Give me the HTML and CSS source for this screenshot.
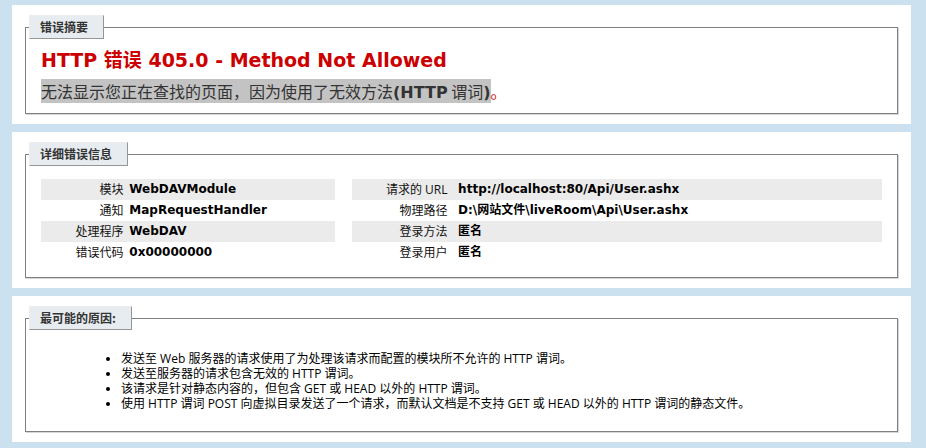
FILE: index.html
```html
<!DOCTYPE html>
<html lang="zh-CN">
<head>
<meta charset="utf-8">
<title>IIS 错误 405.0</title>
<link rel="stylesheet" href="styles.css">
</head>
<body>
<div class="content">
  <div class="panel">
    <fieldset>
      <legend>错误摘要</legend>
      <h2>HTTP 错误 405.0 - Method Not Allowed</h2>
      <h3><span class="sel">无法显示您正在查找的页面，因为使用了无效方法<b>(HTTP</b> 谓词<b>)</b></span>。</h3>
    </fieldset>
  </div>

  <div class="panel">
    <fieldset>
      <legend>详细错误信息</legend>
      <div class="details">
        <div class="details-left">
          <table>
            <colgroup><col class="key-l"><col></colgroup>
            <tr class="alt"><th>模块</th><td>WebDAVModule</td></tr>
            <tr><th>通知</th><td>MapRequestHandler</td></tr>
            <tr class="alt"><th>处理程序</th><td>WebDAV</td></tr>
            <tr><th>错误代码</th><td>0x00000000</td></tr>
          </table>
        </div>
        <div class="details-right">
          <table>
            <colgroup><col class="key-r"><col></colgroup>
            <tr class="alt"><th>请求的 URL</th><td>http://localhost:80/Api/User.ashx</td></tr>
            <tr><th>物理路径</th><td>D:\网站文件\liveRoom\Api\User.ashx</td></tr>
            <tr class="alt"><th>登录方法</th><td>匿名</td></tr>
            <tr><th>登录用户</th><td>匿名</td></tr>
          </table>
        </div>
      </div>
    </fieldset>
  </div>

  <div class="panel">
    <fieldset>
      <legend>最可能的原因:</legend>
      <ul>
        <li>发送至 Web 服务器的请求使用了为处理该请求而配置的模块所不允许的 HTTP 谓词。</li>
        <li>发送至服务器的请求包含无效的 HTTP 谓词。</li>
        <li>该请求是针对静态内容的，但包含 GET 或 HEAD 以外的 HTTP 谓词。</li>
        <li>使用 HTTP 谓词 POST 向虚拟目录发送了一个请求，而默认文档是不支持 GET 或 HEAD 以外的 HTTP 谓词的静态文件。</li>
      </ul>
    </fieldset>
  </div>
</div>
</body>
</html>
```

FILE: styles.css
```css
html, body {
  margin: 0;
  padding: 0;
  background: #CBE1EF;
}
body {
  font-family: "DejaVu Sans", "Noto Sans CJK SC", sans-serif;
  font-size: 12px;
  color: #000;
}
.content {
  padding: 5px 15px 0 12px;
}
.panel {
  background: #fff;
  padding: 10px 13px;
}
.panel + .panel {
  margin-top: 8px;
}
fieldset {
  margin: 0;
  padding: 0 15px 10px 15px;
  border: 1px solid #808080;
  box-shadow: 1px 1px 0 #d6d6d6;
  min-width: 0;
}
legend {
  font-family: "Noto Sans CJK SC", sans-serif;
  color: #333;
  font-weight: bold;
  font-size: 12px;
  line-height: 14px;
  padding: 4px 15px 4px 10px;
  margin: 0 0 0 -12px;
  border-top: 1px solid #EDEDED;
  border-left: 1px solid #EDEDED;
  border-right: 1px solid #969696;
  border-bottom: 1px solid #969696;
  background: #E7ECF0;
}
h2 {
  margin: 10px 0 0 0;
  font-size: 19px;
  line-height: 22px;
  color: #CC0000;
  font-weight: bold;
}
h3 {
  margin: 10px 0 0 0;
  font-family: "Noto Sans CJK SC", sans-serif;
  font-size: 16px;
  line-height: 21px;
  font-weight: normal;
  color: #CC0000;
}
h3 b {
  font-family: "DejaVu Sans", sans-serif;
  font-weight: bold;
}
.sel {
  background: #c3c3c3;
  color: #333;
}
.details {
  display: flex;
  gap: 2%;
  margin: 13px 0 4px 0;
}
.details-left {
  width: 35%;
}
.details-right {
  width: 63%;
}
table {
  width: 100%;
  border-collapse: collapse;
  table-layout: fixed;
  margin: 0;
}
col.key-l {
  width: 30%;
}
col.key-r {
  width: 20%;
}
th, td {
  padding: 3px 0;
  line-height: 15px;
  vertical-align: top;
  white-space: nowrap;
}
th {
  font-family: "Open Sans", "Noto Sans CJK SC", sans-serif;
  font-weight: normal;
  text-align: right;
  padding-right: 2%;
  color: #111;
}
td {
  font-weight: bold;
  text-align: left;
}
tr.alt th, tr.alt td {
  background: #ebebeb;
}
ul {
  margin: 21px 0 10px 40px;
  padding-left: 40px;
  font-family: "Open Sans", "Noto Sans CJK SC", sans-serif;
  font-size: 12px;
}
li {
  line-height: 15px;
}
```
